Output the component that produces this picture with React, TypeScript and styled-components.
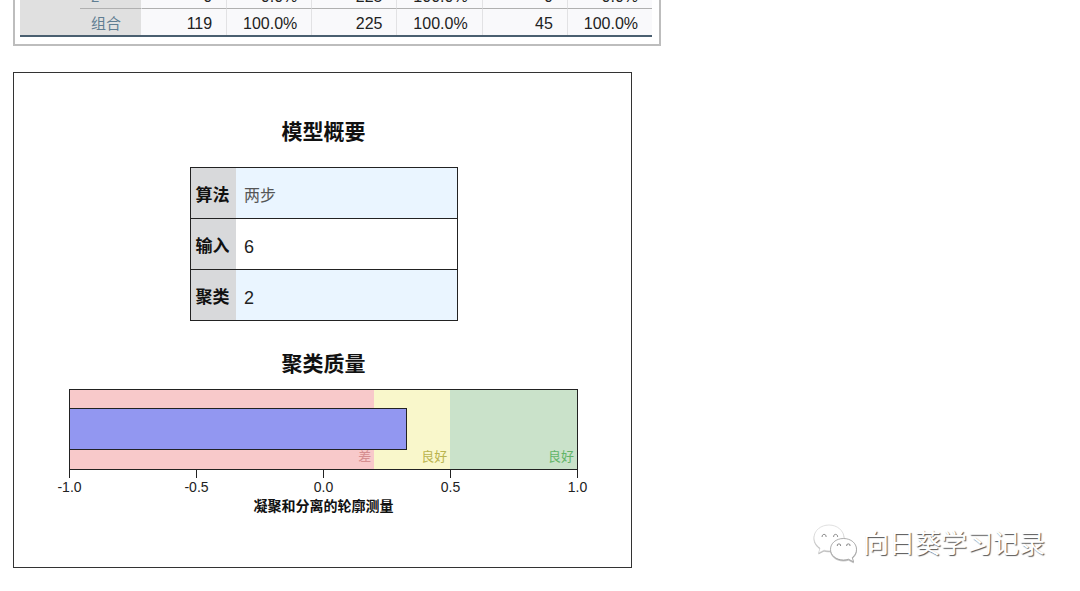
import React from "react";
import styled, { createGlobalStyle } from "styled-components";

const GlobalStyle = createGlobalStyle`
  *, *::before, *::after { box-sizing: border-box; }
  body {
    margin: 0;
    background: #fff;
    color: #222;
    font-family: "Liberation Sans", "Noto Sans CJK SC", sans-serif;
  }
`;

const Page = styled.main`
  display: grid;
  grid-template-columns: 27fr 16fr;
  padding: 0 35px 23px 13px;
`;

const Output = styled.div`
  display: flex;
  flex-direction: column;
  gap: 26px;
  min-width: 0;
`;

const PivotFrame = styled.section`
  display: flex;
  align-items: flex-end;
  height: 46px;
  overflow: hidden;
  padding: 0 7px 7px 5px;
  border: 2px solid #bdbdbd;
  border-top: 0;
`;

const PivotTable = styled.table`
  width: 100%;
  table-layout: fixed;
  border-collapse: separate;
  border-spacing: 0;
  border-bottom: 2px solid #4a5f70;
  font-size: 16px;
  line-height: 20px;
`;

const GroupCell = styled.th`
  width: 60px;
  background: #e0e0e0;
`;

const RowLabel = styled.th<{ $ruled?: boolean }>`
  width: 61px;
  height: 27px;
  padding: 5px 0 1px 11px;
  background: #e0e0e0;
  border-top: 1px solid ${(p) => (p.$ruled ? "#b0b0b0" : "transparent")};
  color: #5f7d92;
  font-size: 15px;
  font-weight: 400;
  text-align: left;
`;

const NumberCell = styled.td<{ $ruled?: boolean; $first?: boolean }>`
  height: 27px;
  padding: 5px 14px 1px 0;
  background: #f9f9fb;
  border-top: 1px solid ${(p) => (p.$ruled ? "#b0b0b0" : "transparent")};
  border-left: 1px solid ${(p) => (p.$first ? "#f9f9fb" : "#e2e2e4")};
  text-align: right;
`;

const ModelView = styled.section`
  display: flex;
  flex-direction: column;
  align-items: center;
  margin-right: 29px;
  padding: 44px 53px 51px 55px;
  border: 1px solid #333;
`;

const Heading = styled.h2`
  margin: 0;
  color: #111;
  font-size: 21px;
  font-weight: 700;
  line-height: 30px;
`;

const SummaryTable = styled.table`
  width: 53%;
  max-width: 268px;
  margin: 20px 0 28px;
  border-collapse: collapse;
  border: 1px solid #222;
`;

const SummaryRow = styled.tr`
  height: 51px;
  border-bottom: 1px solid #222;
  &:nth-child(odd) { background: #eaf5ff; }
`;

const SummaryLabel = styled.th`
  width: 46px;
  padding: 5px 0 0 5px;
  background: #d8d9db;
  color: #111;
  font-size: 17px;
  line-height: 24px;
  text-align: left;
  white-space: nowrap;
`;

const SummaryValue = styled.td<{ $word?: boolean }>`
  padding: 5px 8px 0;
  color: ${(p) => (p.$word ? "#555" : "#222")};
  font-size: ${(p) => (p.$word ? 16 : 18)}px;
  line-height: 24px;
`;

const Chart = styled.figure`
  width: 100%;
  margin: 10px 0 0;
`;

const Plot = styled.div`
  position: relative;
  display: grid;
  grid-template-columns: 60% 15% 25%;
  height: 81px;
  border: 1px solid #222;
`;

const Band = styled.div<{ $fill: string; $ink: string }>`
  display: flex;
  align-items: flex-end;
  justify-content: flex-end;
  padding: 0 3px 2px;
  background: ${(p) => p.$fill};
  color: ${(p) => p.$ink};
  font-size: 13px;
  line-height: 20px;
`;

const Bar = styled.div`
  position: absolute;
  top: 18px;
  left: 0;
  height: 42px;
  background: #9297f1;
  border: 1px solid #222;
  border-left: 0;
`;

const Axis = styled.div`
  display: flex;
  justify-content: space-between;
`;

const Tick = styled.div`
  display: flex;
  flex-direction: column;
  align-items: center;
  width: 1px;
  color: #222;
  font-size: 14px;
  line-height: 18px;
  white-space: nowrap;
  &::before {
    content: "";
    flex: none;
    width: 1px;
    height: 8px;
    background: #222;
  }
`;

const AxisTitle = styled.figcaption`
  color: #111;
  font-size: 14px;
  font-weight: 700;
  line-height: 20px;
  text-align: center;
`;

const Watermark = styled.div`
  display: flex;
  align-items: center;
  align-self: end;
  justify-self: end;
  gap: 4px;
  margin-bottom: 4px;
  color: #fff;
  font-size: 26px;
  line-height: 40px;
  white-space: nowrap;
  text-shadow: 1px 1px 1px #555;
`;

const WeChatMark = styled.svg`
  width: 46px;
  height: 40px;
  filter: drop-shadow(0 1px 0 #bbb);
`;

const pivotRows = [
  { label: "2", cells: ["0", "0.0%", "225", "100.0%", "0", "0.0%"] },
  { label: "组合", cells: ["119", "100.0%", "225", "100.0%", "45", "100.0%"] },
];

const summary = [
  { label: "算法", value: "两步", word: true },
  { label: "输入", value: "6" },
  { label: "聚类", value: "2" },
];

const bands = [
  { name: "差", fill: "#f8c9ca", ink: "#d58e90" },
  { name: "良好", fill: "#f9f7cb", ink: "#b9b44e" },
  { name: "良好", fill: "#cae2ca", ink: "#62b568" },
];

const ticks = ["-1.0", "-0.5", "0.0", "0.5", "1.0"];
const silhouette = 0.33;

export default function App() {
  return (
    <>
      <GlobalStyle />
      <Page>
        <Output>
          <PivotFrame>
            <PivotTable>
              <tbody>
                {pivotRows.map((row, r) => (
                  <tr key={row.label}>
                    {r === 0 && <GroupCell rowSpan={2} />}
                    <RowLabel scope="row" $ruled={r > 0}>{row.label}</RowLabel>
                    {row.cells.map((cell, c) => (
                      <NumberCell key={c} $ruled={r > 0} $first={c === 0}>{cell}</NumberCell>
                    ))}
                  </tr>
                ))}
              </tbody>
            </PivotTable>
          </PivotFrame>

          <ModelView>
            <Heading>模型概要</Heading>
            <SummaryTable>
              <tbody>
                {summary.map((row) => (
                  <SummaryRow key={row.label}>
                    <SummaryLabel scope="row">{row.label}</SummaryLabel>
                    <SummaryValue $word={row.word}>{row.value}</SummaryValue>
                  </SummaryRow>
                ))}
              </tbody>
            </SummaryTable>

            <Heading>聚类质量</Heading>
            <Chart>
              <Plot>
                {bands.map((band, i) => (
                  <Band key={i} $fill={band.fill} $ink={band.ink}>{band.name}</Band>
                ))}
                <Bar style={{ width: `${((silhouette + 1) / 2) * 100}%` }} />
              </Plot>
              <Axis>
                {ticks.map((tick) => (
                  <Tick key={tick}>{tick}</Tick>
                ))}
              </Axis>
              <AxisTitle>凝聚和分离的轮廓测量</AxisTitle>
            </Chart>
          </ModelView>
        </Output>

        <Watermark>
          <WeChatMark viewBox="0 0 46 40" aria-hidden="true">
            <path
              d="M16 1C7.700 1 1 6.600 1 13.800C1 18 3.400 21.700 7 24L5.600 29L11 26.200C12.600 26.600 14.300 26.900 16 26.900C24.300 26.900 31 21 31 13.900C31 6.700 24.300 1 16 1Z"
              fill="#fff" stroke="#ccc" strokeWidth="0.600"
            />
            <path
              d="M30.500 14.500C23 14.500 17.500 19.300 17.500 25.300C17.500 31.300 23 36 30.500 36C32.300 36 34 35.700 35.500 35.200L40.500 37.800L39.300 33.500C42 31.500 43.500 28.600 43.500 25.300C43.500 19.300 38 14.500 30.500 14.500Z"
              fill="#fff" stroke="#999" strokeWidth="0.800"
            />
            <path
              d="M9.200 13a2 2 0 1 1 3.800 0M20.700 13a2 2 0 1 1 3.800 0M24.300 22a1.700 1.700 0 1 1 3.300 0M33.700 22a1.700 1.700 0 1 1 3.300 0"
              fill="none" stroke="#888" strokeWidth="1"
            />
          </WeChatMark>
          <span>向日葵学习记录</span>
        </Watermark>
      </Page>
    </>
  );
}
